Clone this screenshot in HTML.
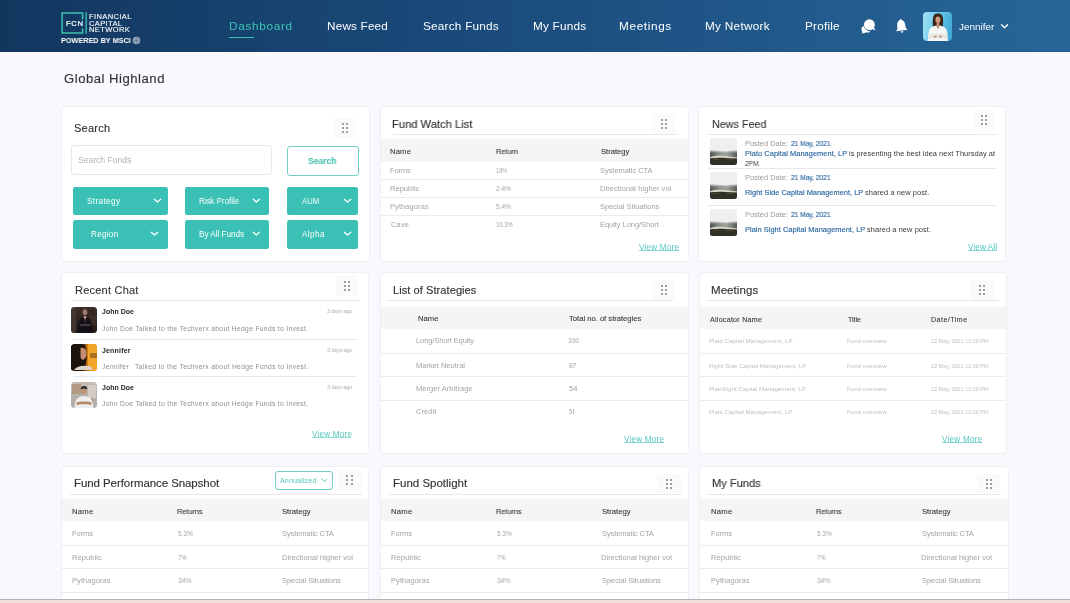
<!DOCTYPE html>
<html><head><meta charset="utf-8"><title>Dashboard</title>
<style>
html,body{margin:0;padding:0;}
body{width:1070px;height:603px;overflow:hidden;position:relative;background:#f8f8fe;font-family:"Liberation Sans",sans-serif;}
.t{position:absolute;white-space:nowrap;line-height:0;font-family:"Liberation Sans",sans-serif;will-change:transform;font-variant-ligatures:none;}
.card{position:absolute;background:#fff;border:1px solid #efefef;border-radius:4px;box-sizing:border-box;}
.hl{position:absolute;height:1px;background:#e6e6e6;}
.dot{position:absolute;width:2px;height:2px;border-radius:50%;background:#7d7d7d;}
</style></head>
<body>
<div style="position:absolute;left:0px;top:0px;width:1070px;height:52px;background:linear-gradient(90deg,#12375f 0%,#1a4b7c 45%,#276698 100%);"></div>
<div style="position:absolute;left:0px;top:51px;width:1070px;height:1px;background:rgba(10,30,60,0.12);"></div>
<div class="card" style="left:61px;top:106px;width:309px;height:156px;"></div>
<div class="card" style="left:380px;top:106px;width:309px;height:156px;"></div>
<div class="card" style="left:698px;top:106px;width:308px;height:156px;"></div>
<div class="card" style="left:61px;top:272px;width:308px;height:182px;"></div>
<div class="card" style="left:380px;top:272px;width:309px;height:182px;"></div>
<div class="card" style="left:699px;top:272px;width:308px;height:182px;"></div>
<div class="card" style="left:61px;top:466px;width:308px;height:154px;"></div>
<div class="card" style="left:380px;top:466px;width:309px;height:154px;"></div>
<div class="card" style="left:699px;top:466px;width:310px;height:154px;"></div>
<div style="position:absolute;left:229px;top:36.7px;width:25px;height:1.5px;background:#3ec3b3;"></div>
<svg style="position:absolute;left:1000px;top:23px" width="9" height="7" viewBox="0 0 9 7"><path d="M1.5 1.8 L4.5 4.8 L7.5 1.8" fill="none" stroke="#fff" stroke-width="1.4" stroke-linecap="round" stroke-linejoin="round"/></svg>
<svg style="position:absolute;left:860px;top:18px" width="17" height="16" viewBox="0 0 17 16"><path d="M4.8 7.2 C2.6 8 1.2 9.8 1.4 11.8 C1.5 12.8 1.9 13.6 2.5 14.2 L1.6 15.3 C3.4 15.4 4.8 15 5.7 14.4 C7.4 14.9 9.3 14.5 10.5 13.4 C7.2 13.5 4.8 11 4.8 7.2 Z" fill="#fff"/><circle cx="9.4" cy="6.7" r="5.6" fill="#fff" stroke="#225b8f" stroke-width="0.8"/><path d="M12.3 11 L15.4 12.6 L13.9 9.3 Z" fill="#fff"/><circle cx="9.4" cy="6.7" r="5.2" fill="#fff"/></svg>
<svg style="position:absolute;left:894px;top:18px" width="15" height="16" viewBox="0 0 15 16"><g transform="rotate(-7 7.3 8)"><path d="M7.3 1 C7.7 1 8 1.5 8.3 2.2 C10.4 2.9 11.2 4.6 11.3 6.8 L11.4 9.8 C11.6 10.9 12.4 11.8 13.2 12.6 L1.5 12.6 C2.3 11.8 3.1 10.9 3.2 9.8 L3.3 6.8 C3.4 4.6 4.2 2.9 6.3 2.2 C6.6 1.5 6.9 1 7.3 1 Z" fill="#fff"/><path d="M6 13.3 L8.6 13.3 C8.6 14.2 8 14.8 7.3 14.8 C6.6 14.8 6 14.2 6 13.3 Z" fill="#fff"/></g></svg>
<div style="position:absolute;left:922.5px;top:11.7px;width:29.3px;height:29.4px;border-radius:4px;overflow:hidden;background:linear-gradient(100deg,#a4e2f5 0%,#74cdec 40%,#3aa6d2 100%);"><svg width="29.3" height="29.4" viewBox="0 0 29 29" style="position:absolute;left:0;top:0"><path d="M10 15 C9.3 10 9.5 4.5 11.5 2.3 C13 1 17 1 18.3 2.5 C20.2 4.5 20.2 10 19.6 15 C18 15.5 11.5 15.5 10 15 Z" fill="#3b2418"/><ellipse cx="14.8" cy="7.6" rx="2.5" ry="3.3" fill="#d09a80"/><path d="M13.6 10 L16 10 L16.3 14 L13.3 14 Z" fill="#c48e74"/><path d="M5 29.5 C5 24 5.2 17.5 8 15.3 C10 14 12 13.5 13.3 13.3 L14.8 17 L16.3 13.3 C17.6 13.5 19.6 14 21.6 15.3 C24.4 17.5 24.6 24 24.6 29.5 Z" fill="#f6f6f4"/><path d="M13.3 13.3 L16.3 13.3 L14.8 17 Z" fill="#c9937a"/><path d="M6.3 22.8 C10 21.3 19 21.3 23.3 22.8 L23.3 26.2 C19 25 10 25 6.3 26.2 Z" fill="#ecebe8" stroke="#d5cfc9" stroke-width="0.4"/><path d="M10.5 23.6 L13.5 23.3 L13.6 25 L10.6 25.3 Z" fill="#c28f76"/><path d="M16 23.3 L19 23.6 L18.9 25.3 L15.9 25 Z" fill="#c28f76"/></svg></div>
<svg style="position:absolute;left:60px;top:11px" width="90" height="35" viewBox="0 0 90 35"><path d="M22.6 8.5 L22.6 1.9 L2.1 1.9 L2.1 21.9 L22.6 21.9 L22.6 17.5" fill="none" stroke="#3ec3b3" stroke-width="1.5"/><rect x="25.5" y="1.2" width="1.3" height="21.5" fill="#3ec3b3"/></svg>
<svg style="position:absolute;left:131.5px;top:35.5px" width="9" height="9" viewBox="0 0 9 9"><circle cx="4.5" cy="4.5" r="3.8" fill="#9aa8bb"/><path d="M4.5 0.8 L4.5 8.2 M0.8 4.5 L8.2 4.5 M1.9 1.9 L7.1 7.1 M7.1 1.9 L1.9 7.1" stroke="#5d7190" stroke-width="0.5"/></svg>
<div style="position:absolute;left:333.5px;top:118px;width:22.5px;height:20px;background:#fafafa;border-radius:2px;"></div>
<div class="dot" style="left:341.8px;top:123.0px"></div>
<div class="dot" style="left:341.8px;top:127.2px"></div>
<div class="dot" style="left:341.8px;top:131.2px"></div>
<div class="dot" style="left:346.2px;top:123.0px"></div>
<div class="dot" style="left:346.2px;top:127.2px"></div>
<div class="dot" style="left:346.2px;top:131.2px"></div>
<div style="position:absolute;left:71.4px;top:145.4px;width:200.4px;height:29.19999999999999px;border:1px solid #e8e8e8;border-radius:3px;box-sizing:border-box;background:#fff;"></div>
<div style="position:absolute;left:286.5px;top:146.2px;width:72.19999999999999px;height:29.400000000000006px;border:1px solid #72d2c6;border-radius:3px;box-sizing:border-box;background:#fff;"></div>
<div style="position:absolute;left:73.3px;top:186.9px;width:94.3px;height:28.299999999999983px;background:#3ac0b4;border-radius:2.5px;"></div>
<svg style="position:absolute;left:153px;top:198.25px" width="9" height="6" viewBox="0 0 9 6"><path d="M1.3 1.3 L4.5 4.0 L7.7 1.3" fill="none" stroke="#fff" stroke-width="1.3" stroke-linecap="round" stroke-linejoin="round"/></svg>
<div style="position:absolute;left:184.9px;top:186.9px;width:84.29999999999998px;height:28.299999999999983px;background:#3ac0b4;border-radius:2.5px;"></div>
<svg style="position:absolute;left:251.7px;top:198.25px" width="8.800000000000011" height="6" viewBox="0 0 8.800000000000011 6"><path d="M1.3 1.3 L4.400000000000006 4.0 L7.5000000000000115 1.3" fill="none" stroke="#fff" stroke-width="1.3" stroke-linecap="round" stroke-linejoin="round"/></svg>
<div style="position:absolute;left:287px;top:186.9px;width:71.39999999999998px;height:28.299999999999983px;background:#3ac0b4;border-radius:2.5px;"></div>
<svg style="position:absolute;left:343.3px;top:198.25px" width="9.099999999999966" height="6" viewBox="0 0 9.099999999999966 6"><path d="M1.3 1.3 L4.549999999999983 4.0 L7.799999999999966 1.3" fill="none" stroke="#fff" stroke-width="1.3" stroke-linecap="round" stroke-linejoin="round"/></svg>
<div style="position:absolute;left:73.3px;top:219.9px;width:94.3px;height:28.69999999999999px;background:#3ac0b4;border-radius:2.5px;"></div>
<svg style="position:absolute;left:149.8px;top:231.45px" width="9.0" height="6" viewBox="0 0 9.0 6"><path d="M1.3 1.3 L4.5 4.0 L7.7 1.3" fill="none" stroke="#fff" stroke-width="1.3" stroke-linecap="round" stroke-linejoin="round"/></svg>
<div style="position:absolute;left:184.9px;top:219.9px;width:84.29999999999998px;height:28.69999999999999px;background:#3ac0b4;border-radius:2.5px;"></div>
<svg style="position:absolute;left:252.2px;top:231.45px" width="8.600000000000023" height="6" viewBox="0 0 8.600000000000023 6"><path d="M1.3 1.3 L4.300000000000011 4.0 L7.300000000000023 1.3" fill="none" stroke="#fff" stroke-width="1.3" stroke-linecap="round" stroke-linejoin="round"/></svg>
<div style="position:absolute;left:287px;top:219.9px;width:71.39999999999998px;height:28.69999999999999px;background:#3ac0b4;border-radius:2.5px;"></div>
<svg style="position:absolute;left:343.3px;top:231.45px" width="9.099999999999966" height="6" viewBox="0 0 9.099999999999966 6"><path d="M1.3 1.3 L4.549999999999983 4.0 L7.799999999999966 1.3" fill="none" stroke="#fff" stroke-width="1.3" stroke-linecap="round" stroke-linejoin="round"/></svg>
<div class="hl" style="left:393px;top:134px;width:283.4px;background:#e8e8e8"></div>
<div style="position:absolute;left:651.8px;top:114.2px;width:23.200000000000045px;height:19.499999999999986px;background:#fafafa;border-radius:2px;"></div>
<div class="dot" style="left:660.9px;top:119.2px"></div>
<div class="dot" style="left:660.9px;top:123.4px"></div>
<div class="dot" style="left:660.9px;top:127.4px"></div>
<div class="dot" style="left:664.9px;top:119.2px"></div>
<div class="dot" style="left:664.9px;top:123.4px"></div>
<div class="dot" style="left:664.9px;top:127.4px"></div>
<div style="position:absolute;left:381px;top:139.2px;width:307px;height:22.400000000000006px;background:#f5f5f5;"></div>
<div class="hl" style="left:381px;top:178.8px;width:307px;background:#ebebeb"></div>
<div class="hl" style="left:381px;top:196.9px;width:307px;background:#ebebeb"></div>
<div class="hl" style="left:381px;top:215.1px;width:307px;background:#ebebeb"></div>
<div class="hl" style="left:708px;top:134px;width:289px;background:#e8e8e8"></div>
<div style="position:absolute;left:972.7px;top:110px;width:22.699999999999932px;height:20.599999999999994px;background:#fafafa;border-radius:2px;"></div>
<div class="dot" style="left:981.2px;top:115.3px"></div>
<div class="dot" style="left:981.2px;top:119.3px"></div>
<div class="dot" style="left:981.2px;top:123.3px"></div>
<div class="dot" style="left:984.9px;top:115.3px"></div>
<div class="dot" style="left:984.9px;top:119.3px"></div>
<div class="dot" style="left:984.9px;top:123.3px"></div>
<div style="position:absolute;left:710.2px;top:137.9px;width:27px;height:27px;border-radius:2.5px;overflow:hidden;background:#eeeeec"><svg width="27" height="27" viewBox="0 0 27 27" style="position:absolute;left:0;top:0"><defs><linearGradient id="nm" x1="0" y1="0" x2="1" y2="0"><stop offset="0" stop-color="#4f554f"/><stop offset="0.35" stop-color="#8c918c"/><stop offset="0.6" stop-color="#9fa49f"/><stop offset="1" stop-color="#555b55"/></linearGradient><linearGradient id="nv" x1="0" y1="0" x2="0" y2="1"><stop offset="0" stop-color="#eeeeec" stop-opacity="1"/><stop offset="1" stop-color="#eeeeec" stop-opacity="0"/></linearGradient></defs><rect x="0" y="0" width="27" height="12" fill="#efefed"/><path d="M0 12.5 C5 11.8 9 13 13.5 13.3 C18 13.5 22 12 27 12.3 L27 21 L0 21 Z" fill="url(#nm)"/><rect x="0" y="11.5" width="27" height="3.5" fill="url(#nv)"/><path d="M0 19.2 C4 18.2 8 17.6 13 18 C17 18.3 21 18.8 27 19.4 L27 21 L0 21 Z" fill="#d9d5c8"/><path d="M0 20.3 C5 19.9 10 19.6 15 20 C19 20.3 23 20.2 27 20.5 L27 27 L0 27 Z" fill="#2f3129"/><rect x="3" y="21" width="6" height="1" fill="#5a5238" opacity="0.7"/><rect x="15" y="21.2" width="8" height="1" fill="#5a5238" opacity="0.6"/></svg></div>
<div style="position:absolute;left:710.3px;top:172.1px;width:27px;height:27px;border-radius:2.5px;overflow:hidden;background:#eeeeec"><svg width="27" height="27" viewBox="0 0 27 27" style="position:absolute;left:0;top:0"><defs><linearGradient id="nm" x1="0" y1="0" x2="1" y2="0"><stop offset="0" stop-color="#4f554f"/><stop offset="0.35" stop-color="#8c918c"/><stop offset="0.6" stop-color="#9fa49f"/><stop offset="1" stop-color="#555b55"/></linearGradient><linearGradient id="nv" x1="0" y1="0" x2="0" y2="1"><stop offset="0" stop-color="#eeeeec" stop-opacity="1"/><stop offset="1" stop-color="#eeeeec" stop-opacity="0"/></linearGradient></defs><rect x="0" y="0" width="27" height="12" fill="#efefed"/><path d="M0 12.5 C5 11.8 9 13 13.5 13.3 C18 13.5 22 12 27 12.3 L27 21 L0 21 Z" fill="url(#nm)"/><rect x="0" y="11.5" width="27" height="3.5" fill="url(#nv)"/><path d="M0 19.2 C4 18.2 8 17.6 13 18 C17 18.3 21 18.8 27 19.4 L27 21 L0 21 Z" fill="#d9d5c8"/><path d="M0 20.3 C5 19.9 10 19.6 15 20 C19 20.3 23 20.2 27 20.5 L27 27 L0 27 Z" fill="#2f3129"/><rect x="3" y="21" width="6" height="1" fill="#5a5238" opacity="0.7"/><rect x="15" y="21.2" width="8" height="1" fill="#5a5238" opacity="0.6"/></svg></div>
<div style="position:absolute;left:710.3px;top:209.1px;width:27px;height:27px;border-radius:2.5px;overflow:hidden;background:#eeeeec"><svg width="27" height="27" viewBox="0 0 27 27" style="position:absolute;left:0;top:0"><defs><linearGradient id="nm" x1="0" y1="0" x2="1" y2="0"><stop offset="0" stop-color="#4f554f"/><stop offset="0.35" stop-color="#8c918c"/><stop offset="0.6" stop-color="#9fa49f"/><stop offset="1" stop-color="#555b55"/></linearGradient><linearGradient id="nv" x1="0" y1="0" x2="0" y2="1"><stop offset="0" stop-color="#eeeeec" stop-opacity="1"/><stop offset="1" stop-color="#eeeeec" stop-opacity="0"/></linearGradient></defs><rect x="0" y="0" width="27" height="12" fill="#efefed"/><path d="M0 12.5 C5 11.8 9 13 13.5 13.3 C18 13.5 22 12 27 12.3 L27 21 L0 21 Z" fill="url(#nm)"/><rect x="0" y="11.5" width="27" height="3.5" fill="url(#nv)"/><path d="M0 19.2 C4 18.2 8 17.6 13 18 C17 18.3 21 18.8 27 19.4 L27 21 L0 21 Z" fill="#d9d5c8"/><path d="M0 20.3 C5 19.9 10 19.6 15 20 C19 20.3 23 20.2 27 20.5 L27 27 L0 27 Z" fill="#2f3129"/><rect x="3" y="21" width="6" height="1" fill="#5a5238" opacity="0.7"/><rect x="15" y="21.2" width="8" height="1" fill="#5a5238" opacity="0.6"/></svg></div>
<div class="hl" style="left:708px;top:168.2px;width:289px;background:#e8e8e8"></div>
<div class="hl" style="left:708px;top:204.7px;width:289px;background:#e8e8e8"></div>
<div class="hl" style="left:71px;top:300px;width:289px;background:#e8e8e8"></div>
<div style="position:absolute;left:335.6px;top:276.2px;width:22.69999999999999px;height:20.30000000000001px;background:#fafafa;border-radius:2px;"></div>
<div class="dot" style="left:344.1px;top:281.1px"></div>
<div class="dot" style="left:344.1px;top:285.3px"></div>
<div class="dot" style="left:344.1px;top:289.2px"></div>
<div class="dot" style="left:347.9px;top:281.1px"></div>
<div class="dot" style="left:347.9px;top:285.3px"></div>
<div class="dot" style="left:347.9px;top:289.2px"></div>
<div style="position:absolute;left:71px;top:306.7px;width:26.2px;height:26.2px;border-radius:3.5px;overflow:hidden;background:linear-gradient(180deg,#3a2c28 0%,#251a18 100%)"><svg width="26" height="26" viewBox="0 0 26 26" style="position:absolute;left:0;top:0"><rect x="0" y="0" width="5" height="26" fill="#4a3c36" opacity="0.7"/><rect x="19" y="8" width="7" height="10" fill="#3e302a" opacity="0.8"/><ellipse cx="14" cy="5.2" rx="2.3" ry="3" fill="#a07868"/><path d="M6.5 26 C6.5 15 9 10 14 10 C19 10 21.5 15 21.5 26 Z" fill="#141116"/><path d="M12.5 9.5 L15.5 9.5 L14 13 Z" fill="#e0dcdc"/><path d="M13.6 10.5 L14.4 10.5 L14.6 15 L13.4 15 Z" fill="#7a2a30"/><path d="M9 17.5 C11 16.8 17 16.8 19.5 17.5 L19.5 19 C17 18.5 11 18.5 9 19 Z" fill="#4e4248"/></svg></div>
<div style="position:absolute;left:71px;top:344.4px;width:26.2px;height:26.2px;border-radius:3.5px;overflow:hidden;background:linear-gradient(90deg,#1e150f 0%,#2a1d14 45%,#c9780e 62%,#f2a526 100%)"><svg width="26" height="26" viewBox="0 0 26 26" style="position:absolute;left:0;top:0"><rect x="17" y="0" width="9" height="26" fill="#f0a428"/><rect x="19" y="9" width="7" height="5" fill="#8a5a20" opacity="0.7"/><path d="M0 26 L0 2 C3 -1 11 -1 14 2 C16 6 16 14 15 18 L14 26 Z" fill="#1c130e"/><path d="M9.5 4 C12 3 15 4.5 15.5 8 C16 11 15 14 13 15.5 C11.5 16.5 10 15 9.5 13 Z" fill="#c48c70"/><path d="M3 26 C6 21.5 13 21 20 22.5 L22 26 Z" fill="#dcd4cc"/></svg></div>
<div style="position:absolute;left:71px;top:381.8px;width:26.2px;height:26.2px;border-radius:3.5px;overflow:hidden;background:linear-gradient(180deg,#c4bcb4 0%,#b0aaa4 100%)"><svg width="26" height="26" viewBox="0 0 26 26" style="position:absolute;left:0;top:0"><rect x="1" y="2" width="9" height="10" fill="#a8845c" opacity="0.55"/><rect x="17" y="3" width="8" height="13" fill="#d8d2cc" opacity="0.8"/><rect x="19" y="17" width="3" height="8" fill="#a04030" opacity="0.5"/><path d="M9.8 6.5 C9.8 3.2 16.2 3.2 16.2 6.5 L16.2 7.3 L9.8 7.3 Z" fill="#2c2c34"/><ellipse cx="13" cy="9.5" rx="2.7" ry="3" fill="#c09474"/><path d="M3.5 26 C3.5 17.5 7 14 13 14 C19 14 22.5 17.5 22.5 26 Z" fill="#eeeeee"/><path d="M5.5 20.5 C9 19.2 17 19.2 20.5 20.5 L20.5 23 C17 22 9 22 5.5 23 Z" fill="#b48a6c"/></svg></div>
<div class="hl" style="left:73.2px;top:338.8px;width:284.1px;background:#e8e8e8"></div>
<div class="hl" style="left:73.2px;top:375.9px;width:284.1px;background:#e8e8e8"></div>
<div class="hl" style="left:387.2px;top:300px;width:284.09999999999997px;background:#e8e8e8"></div>
<div style="position:absolute;left:652.4px;top:280.2px;width:22.899999999999977px;height:19.5px;background:#fafafa;border-radius:2px;"></div>
<div class="dot" style="left:661.3px;top:285.2px"></div>
<div class="dot" style="left:661.3px;top:289.2px"></div>
<div class="dot" style="left:661.3px;top:293.4px"></div>
<div class="dot" style="left:665.4px;top:285.2px"></div>
<div class="dot" style="left:665.4px;top:289.2px"></div>
<div class="dot" style="left:665.4px;top:293.4px"></div>
<div style="position:absolute;left:381px;top:306.7px;width:307px;height:22.100000000000023px;background:#f5f5f5;"></div>
<div class="hl" style="left:381px;top:352.8px;width:307px;background:#ebebeb"></div>
<div class="hl" style="left:381px;top:375.7px;width:307px;background:#ebebeb"></div>
<div class="hl" style="left:381px;top:400.1px;width:307px;background:#ebebeb"></div>
<div class="hl" style="left:707.2px;top:300px;width:292.0999999999999px;background:#e8e8e8"></div>
<div style="position:absolute;left:970.1px;top:280.2px;width:23.199999999999932px;height:19.5px;background:#fafafa;border-radius:2px;"></div>
<div class="dot" style="left:978.8px;top:285.3px"></div>
<div class="dot" style="left:978.8px;top:289.3px"></div>
<div class="dot" style="left:978.8px;top:293.3px"></div>
<div class="dot" style="left:983.0px;top:285.3px"></div>
<div class="dot" style="left:983.0px;top:289.3px"></div>
<div class="dot" style="left:983.0px;top:293.3px"></div>
<div style="position:absolute;left:700px;top:306.7px;width:306px;height:21.900000000000034px;background:#f5f5f5;"></div>
<div class="hl" style="left:700px;top:352.5px;width:306px;background:#ebebeb"></div>
<div class="hl" style="left:700px;top:375.7px;width:306px;background:#ebebeb"></div>
<div class="hl" style="left:700px;top:399.9px;width:306px;background:#ebebeb"></div>
<div class="hl" style="left:69.8px;top:494px;width:292.5px;background:#e8e8e8"></div>
<div style="position:absolute;left:337.9px;top:469.7px;width:23.100000000000023px;height:20.19999999999999px;background:#fafafa;border-radius:2px;"></div>
<div class="dot" style="left:346.3px;top:475.4px"></div>
<div class="dot" style="left:346.3px;top:479.4px"></div>
<div class="dot" style="left:346.3px;top:483.3px"></div>
<div class="dot" style="left:350.8px;top:475.4px"></div>
<div class="dot" style="left:350.8px;top:479.4px"></div>
<div class="dot" style="left:350.8px;top:483.3px"></div>
<div style="position:absolute;left:62px;top:498.9px;width:306px;height:22.399999999999977px;background:#f5f5f5;"></div>
<div class="hl" style="left:62px;top:544.9px;width:306px;background:#ebebeb"></div>
<div class="hl" style="left:62px;top:568.4px;width:306px;background:#ebebeb"></div>
<div class="hl" style="left:62px;top:592.0px;width:306px;background:#ebebeb"></div>
<div class="hl" style="left:389px;top:494px;width:292.79999999999995px;background:#e8e8e8"></div>
<div style="position:absolute;left:656.9px;top:473.5px;width:23.700000000000045px;height:19.399999999999977px;background:#fafafa;border-radius:2px;"></div>
<div class="dot" style="left:666.1px;top:479.2px"></div>
<div class="dot" style="left:666.1px;top:483.2px"></div>
<div class="dot" style="left:666.1px;top:487.1px"></div>
<div class="dot" style="left:670.1px;top:479.2px"></div>
<div class="dot" style="left:670.1px;top:483.2px"></div>
<div class="dot" style="left:670.1px;top:487.1px"></div>
<div style="position:absolute;left:381px;top:498.9px;width:307px;height:22.399999999999977px;background:#f5f5f5;"></div>
<div class="hl" style="left:381px;top:544.9px;width:307px;background:#ebebeb"></div>
<div class="hl" style="left:381px;top:568.4px;width:307px;background:#ebebeb"></div>
<div class="hl" style="left:381px;top:592.0px;width:307px;background:#ebebeb"></div>
<div class="hl" style="left:708.3px;top:494px;width:293.1px;background:#e8e8e8"></div>
<div style="position:absolute;left:977.1px;top:473.5px;width:22.799999999999955px;height:19.399999999999977px;background:#fafafa;border-radius:2px;"></div>
<div class="dot" style="left:985.9px;top:479.2px"></div>
<div class="dot" style="left:985.9px;top:483.2px"></div>
<div class="dot" style="left:985.9px;top:487.1px"></div>
<div class="dot" style="left:989.9px;top:479.2px"></div>
<div class="dot" style="left:989.9px;top:483.2px"></div>
<div class="dot" style="left:989.9px;top:487.1px"></div>
<div style="position:absolute;left:700px;top:498.9px;width:308px;height:22.399999999999977px;background:#f5f5f5;"></div>
<div class="hl" style="left:700px;top:544.9px;width:308px;background:#ebebeb"></div>
<div class="hl" style="left:700px;top:568.4px;width:308px;background:#ebebeb"></div>
<div class="hl" style="left:700px;top:592.0px;width:308px;background:#ebebeb"></div>
<div style="position:absolute;left:275.4px;top:471.2px;width:57.60000000000002px;height:18.400000000000034px;border:1px solid #6fd0c4;border-radius:3px;box-sizing:border-box;background:#fff;"></div>
<svg style="position:absolute;left:321.2px;top:477.8px" width="7" height="5" viewBox="0 0 7 5"><path d="M1 1.2 L3.5 3.6 L6 1.2" fill="none" stroke="#55c8ba" stroke-width="1" stroke-linecap="round" stroke-linejoin="round"/></svg>
<div style="position:absolute;left:638.9px;top:250.0px;width:39.80000000000007px;height:1.0px;background:#8cdad0;"></div>
<div style="position:absolute;left:967.8px;top:250.0px;width:29.0px;height:1.0px;background:#8cdad0;"></div>
<div style="position:absolute;left:311.8px;top:437.0px;width:39.69999999999999px;height:1.0px;background:#8cdad0;"></div>
<div style="position:absolute;left:624.3px;top:442.0px;width:39.700000000000045px;height:1.0px;background:#8cdad0;"></div>
<div style="position:absolute;left:942.0px;top:442.0px;width:40.0px;height:1.0px;background:#8cdad0;"></div>
<div class="t" style="left:228.80px;top:25.92px;font-size:11.77px;color:#3ec3b3;letter-spacing:0.700px;">Dashboard</div>
<div class="t" style="left:327.40px;top:25.92px;font-size:11.77px;color:#ffffff;letter-spacing:0.169px;">News Feed</div>
<div class="t" style="left:422.50px;top:25.92px;font-size:11.77px;color:#ffffff;letter-spacing:0.227px;">Search Funds</div>
<div class="t" style="left:532.50px;top:25.92px;font-size:11.77px;color:#ffffff;letter-spacing:0.221px;">My Funds</div>
<div class="t" style="left:619.40px;top:25.92px;font-size:11.77px;color:#ffffff;letter-spacing:0.643px;">Meetings</div>
<div class="t" style="left:705.40px;top:25.92px;font-size:11.77px;color:#ffffff;letter-spacing:0.289px;">My Network</div>
<div class="t" style="left:804.80px;top:25.92px;font-size:11.77px;color:#ffffff;letter-spacing:0.200px;">Profile</div>
<div class="t" style="left:958.55px;top:26.58px;font-size:9.88px;color:#ffffff;letter-spacing:0.021px;">Jennifer</div>
<div class="t" style="left:66.40px;top:24.13px;font-size:7.70px;color:#ffffff;letter-spacing:0.675px;-webkit-text-stroke:0.2px #ffffff;">FCN</div>
<div class="t" style="left:88.70px;top:16.68px;font-size:7.56px;color:#ffffff;letter-spacing:0.381px;-webkit-text-stroke:0.1px #ffffff;">FINANCIAL</div>
<div class="t" style="left:88.95px;top:23.98px;font-size:7.56px;color:#ffffff;letter-spacing:0.350px;-webkit-text-stroke:0.1px #ffffff;">CAPITAL</div>
<div class="t" style="left:88.70px;top:30.38px;font-size:7.56px;color:#ffffff;letter-spacing:0.367px;-webkit-text-stroke:0.1px #ffffff;">NETWORK</div>
<div class="t" style="left:60.74px;top:41.08px;font-size:7.85px;color:#ffffff;transform:scaleX(0.9262);transform-origin:0 0;font-weight:700;">POWERED BY MSCI</div>
<div class="t" style="left:64.00px;top:79.47px;font-size:13.08px;color:#333333;letter-spacing:0.525px;-webkit-text-stroke:0.15px #333333;">Global Highland</div>
<div class="t" style="left:74.20px;top:128.27px;font-size:11.05px;color:#333333;letter-spacing:0.210px;-webkit-text-stroke:0.15px #333333;">Search</div>
<div class="t" style="left:78.20px;top:160.23px;font-size:8.58px;color:#b3b3b3;letter-spacing:-0.018px;">Search Funds</div>
<div class="t" style="left:308.36px;top:160.88px;font-size:9.01px;color:#3dbcad;transform:scaleX(0.9470);transform-origin:0 0;font-weight:700;">Search</div>
<div class="t" style="left:87.45px;top:202.35px;font-size:8.21px;color:#ffffff;letter-spacing:0.350px;">Strategy</div>
<div class="t" style="left:199.12px;top:202.35px;font-size:8.21px;color:#ffffff;transform:scaleX(0.9669);transform-origin:0 0;">Risk Profile</div>
<div class="t" style="left:301.70px;top:202.35px;font-size:8.21px;color:#ffffff;transform:scaleX(0.9314);transform-origin:0 0;">AUM</div>
<div class="t" style="left:90.50px;top:234.55px;font-size:8.21px;color:#ffffff;letter-spacing:0.240px;">Region</div>
<div class="t" style="left:199.10px;top:234.55px;font-size:8.21px;color:#ffffff;letter-spacing:-0.041px;">By All Funds</div>
<div class="t" style="left:301.70px;top:234.55px;font-size:8.21px;color:#ffffff;letter-spacing:0.400px;">Alpha</div>
<div class="t" style="left:392.22px;top:124.12px;font-size:11.48px;color:#333333;transform:scaleX(0.9755);transform-origin:0 0;-webkit-text-stroke:0.15px #333333;">Fund Watch List</div>
<div class="t" style="left:390.40px;top:152.43px;font-size:7.70px;color:#383838;letter-spacing:0.133px;-webkit-text-stroke:0.1px #383838;">Name</div>
<div class="t" style="left:496.12px;top:152.43px;font-size:7.70px;color:#383838;transform:scaleX(0.9573);transform-origin:0 0;-webkit-text-stroke:0.1px #383838;">Return</div>
<div class="t" style="left:600.75px;top:152.43px;font-size:7.70px;color:#383838;letter-spacing:-0.029px;-webkit-text-stroke:0.1px #383838;">Strategy</div>
<div class="t" style="left:390.40px;top:171.31px;font-size:7.49px;color:#a3a3a3;letter-spacing:-0.087px;">Forms</div>
<div class="t" style="left:496.23px;top:171.31px;font-size:7.49px;color:#a3a3a3;transform:scaleX(0.7368);transform-origin:0 0;">10%</div>
<div class="t" style="left:600.45px;top:171.31px;font-size:7.49px;color:#a3a3a3;letter-spacing:-0.042px;">Systematic CTA</div>
<div class="t" style="left:390.40px;top:189.41px;font-size:7.49px;color:#a3a3a3;letter-spacing:0.029px;">Republic</div>
<div class="t" style="left:496.38px;top:189.41px;font-size:7.49px;color:#a3a3a3;transform:scaleX(0.8606);transform-origin:0 0;">2.4%</div>
<div class="t" style="left:600.20px;top:189.41px;font-size:7.49px;color:#a3a3a3;letter-spacing:0.067px;">Directional higher vol</div>
<div class="t" style="left:390.40px;top:206.61px;font-size:7.49px;color:#a3a3a3;letter-spacing:0.094px;">Pythagoras</div>
<div class="t" style="left:496.38px;top:206.61px;font-size:7.49px;color:#a3a3a3;transform:scaleX(0.8606);transform-origin:0 0;">5.4%</div>
<div class="t" style="left:600.45px;top:206.61px;font-size:7.49px;color:#a3a3a3;letter-spacing:-0.012px;">Special Situations</div>
<div class="t" style="left:390.65px;top:224.81px;font-size:7.49px;color:#a3a3a3;letter-spacing:0.167px;">Cave</div>
<div class="t" style="left:496.20px;top:224.81px;font-size:7.49px;color:#a3a3a3;transform:scaleX(0.7902);transform-origin:0 0;">10.3%</div>
<div class="t" style="left:600.20px;top:224.81px;font-size:7.49px;color:#a3a3a3;letter-spacing:-0.044px;">Equity Long/Short</div>
<div class="t" style="left:638.90px;top:247.98px;font-size:8.14px;color:#55c8ba;letter-spacing:0.225px;">View More</div>
<div class="t" style="left:711.97px;top:123.97px;font-size:11.05px;color:#333333;transform:scaleX(0.9743);transform-origin:0 0;-webkit-text-stroke:0.1px #333333;">News Feed</div>
<div class="t" style="left:744.50px;top:144.33px;font-size:7.41px;color:#9a9a9a;letter-spacing:0.005px;">Posted Date:</div>
<div class="t" style="left:790.58px;top:144.33px;font-size:7.41px;color:#2d69a3;transform:scaleX(0.8914);transform-origin:0 0;-webkit-text-stroke:0.15px #2d69a3;">21 May, 2021</div>
<div class="t" style="left:744.50px;top:154.43px;font-size:7.41px;color:#2d69a3;letter-spacing:0.065px;-webkit-text-stroke:0.15px #2d69a3;">Plato Capital Management, LP</div>
<div class="t" style="left:848.70px;top:154.43px;font-size:7.41px;color:#3a3a3a;letter-spacing:0.057px;">is presenting the best idea next Thursday at</div>
<div class="t" style="left:744.78px;top:163.93px;font-size:7.41px;color:#3a3a3a;transform:scaleX(0.8909);transform-origin:0 0;">2PM.</div>
<div class="t" style="left:744.50px;top:177.63px;font-size:7.41px;color:#9a9a9a;letter-spacing:0.005px;">Posted Date:</div>
<div class="t" style="left:790.58px;top:177.63px;font-size:7.41px;color:#2d69a3;transform:scaleX(0.8914);transform-origin:0 0;-webkit-text-stroke:0.15px #2d69a3;">21 May, 2021</div>
<div class="t" style="left:744.50px;top:193.03px;font-size:7.41px;color:#2d69a3;letter-spacing:0.016px;-webkit-text-stroke:0.15px #2d69a3;">Right Side Capital Management, LP</div>
<div class="t" style="left:865.25px;top:193.03px;font-size:7.41px;color:#3a3a3a;letter-spacing:0.103px;">shared a new post.</div>
<div class="t" style="left:744.50px;top:214.63px;font-size:7.41px;color:#9a9a9a;letter-spacing:0.005px;">Posted Date:</div>
<div class="t" style="left:790.58px;top:214.63px;font-size:7.41px;color:#2d69a3;transform:scaleX(0.8914);transform-origin:0 0;-webkit-text-stroke:0.15px #2d69a3;">21 May, 2021</div>
<div class="t" style="left:744.50px;top:229.93px;font-size:7.41px;color:#2d69a3;letter-spacing:0.038px;-webkit-text-stroke:0.15px #2d69a3;">Plain Sight Capital Management, LP</div>
<div class="t" style="left:867.25px;top:229.93px;font-size:7.41px;color:#3a3a3a;letter-spacing:0.085px;">shared a new post.</div>
<div class="t" style="left:967.80px;top:248.38px;font-size:8.14px;color:#55c8ba;letter-spacing:0.107px;">View All</div>
<div class="t" style="left:74.75px;top:290.27px;font-size:11.05px;color:#333333;letter-spacing:0.200px;-webkit-text-stroke:0.1px #333333;">Recent Chat</div>
<div class="t" style="left:102.20px;top:311.68px;font-size:6.98px;color:#262626;letter-spacing:0.029px;font-weight:700;">John Doe</div>
<div class="t" style="left:326.76px;top:311.34px;font-size:5.38px;color:#ababab;transform:scaleX(0.9538);transform-origin:0 0;">3 days ago</div>
<div class="t" style="left:102.20px;top:328.58px;font-size:6.69px;color:#8e8e8e;letter-spacing:0.332px;">John Doe Talked to the Techverx about Hedge Funds to Invest.</div>
<div class="t" style="left:102.20px;top:350.88px;font-size:6.98px;color:#262626;letter-spacing:0.186px;font-weight:700;">Jennifer</div>
<div class="t" style="left:326.76px;top:350.14px;font-size:5.38px;color:#ababab;transform:scaleX(0.9538);transform-origin:0 0;">3 days ago</div>
<div class="t" style="left:102.20px;top:367.48px;font-size:6.69px;color:#8e8e8e;letter-spacing:0.407px;">Jennifer</div>
<div class="t" style="left:135.00px;top:367.48px;font-size:6.69px;color:#8e8e8e;letter-spacing:0.346px;">Talked to the Techverx about Hedge Funds to Invest.</div>
<div class="t" style="left:102.20px;top:388.28px;font-size:6.98px;color:#262626;letter-spacing:0.029px;font-weight:700;">John Doe</div>
<div class="t" style="left:326.76px;top:386.94px;font-size:5.38px;color:#ababab;transform:scaleX(0.9538);transform-origin:0 0;">3 days ago</div>
<div class="t" style="left:102.20px;top:403.88px;font-size:6.69px;color:#8e8e8e;letter-spacing:0.332px;">John Doe Talked to the Techverx about Hedge Funds to Invest.</div>
<div class="t" style="left:311.80px;top:434.88px;font-size:8.14px;color:#55c8ba;letter-spacing:0.212px;">View More</div>
<div class="t" style="left:393.05px;top:290.27px;font-size:11.05px;color:#333333;letter-spacing:0.062px;-webkit-text-stroke:0.15px #333333;">List of Strategies</div>
<div class="t" style="left:418.40px;top:318.93px;font-size:7.70px;color:#383838;letter-spacing:-0.017px;-webkit-text-stroke:0.1px #383838;">Name</div>
<div class="t" style="left:568.90px;top:318.93px;font-size:7.70px;color:#383838;letter-spacing:-0.032px;-webkit-text-stroke:0.1px #383838;">Total no. of strategies</div>
<div class="t" style="left:416.20px;top:341.01px;font-size:7.49px;color:#a3a3a3;letter-spacing:-0.094px;">Long/Short Equity</div>
<div class="t" style="left:568.46px;top:341.01px;font-size:7.49px;color:#a3a3a3;transform:scaleX(0.8766);transform-origin:0 0;">100</div>
<div class="t" style="left:416.20px;top:366.21px;font-size:7.49px;color:#a3a3a3;letter-spacing:-0.004px;">Market Neutral</div>
<div class="t" style="left:568.69px;top:366.21px;font-size:7.49px;color:#a3a3a3;transform:scaleX(0.8516);transform-origin:0 0;">87</div>
<div class="t" style="left:416.20px;top:389.01px;font-size:7.49px;color:#a3a3a3;letter-spacing:0.053px;">Merger Arbitrage</div>
<div class="t" style="left:568.66px;top:389.01px;font-size:7.49px;color:#a3a3a3;transform:scaleX(0.9500);transform-origin:0 0;">54</div>
<div class="t" style="left:416.45px;top:412.41px;font-size:7.49px;color:#a3a3a3;letter-spacing:0.070px;">Credit</div>
<div class="t" style="left:568.73px;top:412.41px;font-size:7.49px;color:#a3a3a3;transform:scaleX(0.6839);transform-origin:0 0;">51</div>
<div class="t" style="left:624.30px;top:440.18px;font-size:8.14px;color:#55c8ba;letter-spacing:0.213px;">View More</div>
<div class="t" style="left:710.70px;top:290.12px;font-size:11.48px;color:#333333;letter-spacing:0.093px;-webkit-text-stroke:0.15px #333333;">Meetings</div>
<div class="t" style="left:709.70px;top:320.43px;font-size:7.12px;color:#383838;letter-spacing:0.254px;-webkit-text-stroke:0.1px #383838;">Allocator Name</div>
<div class="t" style="left:848.00px;top:320.43px;font-size:7.12px;color:#383838;letter-spacing:-0.025px;-webkit-text-stroke:0.1px #383838;">Title</div>
<div class="t" style="left:930.50px;top:320.43px;font-size:7.12px;color:#383838;letter-spacing:0.456px;-webkit-text-stroke:0.1px #383838;">Date/Time</div>
<div class="t" style="left:709.20px;top:340.66px;font-size:6.18px;color:#c0c0c0;letter-spacing:-0.007px;">Plato Capital Management, LP</div>
<div class="t" style="left:847.30px;top:340.66px;font-size:6.18px;color:#c0c0c0;letter-spacing:-0.037px;">Fund overview</div>
<div class="t" style="left:930.78px;top:340.66px;font-size:6.18px;color:#c0c0c0;transform:scaleX(0.8837);transform-origin:0 0;">22 May, 2021 12:00 PM</div>
<div class="t" style="left:709.20px;top:366.46px;font-size:6.18px;color:#c0c0c0;letter-spacing:-0.023px;">Right Side Capital Management, LP</div>
<div class="t" style="left:847.30px;top:366.46px;font-size:6.18px;color:#c0c0c0;letter-spacing:-0.037px;">Fund overview</div>
<div class="t" style="left:930.78px;top:366.46px;font-size:6.18px;color:#c0c0c0;transform:scaleX(0.8837);transform-origin:0 0;">22 May, 2021 12:00 PM</div>
<div class="t" style="left:709.20px;top:388.86px;font-size:6.18px;color:#c0c0c0;letter-spacing:-0.020px;">PlainSight Capital Management, LP</div>
<div class="t" style="left:847.30px;top:388.86px;font-size:6.18px;color:#c0c0c0;letter-spacing:-0.037px;">Fund overview</div>
<div class="t" style="left:930.78px;top:388.86px;font-size:6.18px;color:#c0c0c0;transform:scaleX(0.8837);transform-origin:0 0;">22 May, 2021 12:00 PM</div>
<div class="t" style="left:709.20px;top:412.26px;font-size:6.18px;color:#c0c0c0;letter-spacing:-0.011px;">Plato Capital Management, LP</div>
<div class="t" style="left:847.30px;top:412.26px;font-size:6.18px;color:#c0c0c0;letter-spacing:-0.037px;">Fund overview</div>
<div class="t" style="left:930.78px;top:412.26px;font-size:6.18px;color:#c0c0c0;transform:scaleX(0.8837);transform-origin:0 0;">22 May, 2021 12:00 PM</div>
<div class="t" style="left:942.00px;top:440.18px;font-size:8.14px;color:#55c8ba;letter-spacing:0.250px;">View More</div>
<div class="t" style="left:73.70px;top:483.42px;font-size:11.48px;color:#333333;letter-spacing:-0.060px;-webkit-text-stroke:0.15px #333333;">Fund Performance Snapshot</div>
<div class="t" style="left:71.70px;top:512.23px;font-size:7.70px;color:#383838;letter-spacing:0.250px;-webkit-text-stroke:0.1px #383838;">Name</div>
<div class="t" style="left:177.42px;top:512.23px;font-size:7.70px;color:#383838;transform:scaleX(0.9524);transform-origin:0 0;-webkit-text-stroke:0.1px #383838;">Returns</div>
<div class="t" style="left:282.35px;top:512.23px;font-size:7.70px;color:#383838;letter-spacing:-0.014px;-webkit-text-stroke:0.1px #383838;">Strategy</div>
<div class="t" style="left:71.70px;top:534.41px;font-size:7.49px;color:#a3a3a3;letter-spacing:-0.050px;">Forms</div>
<div class="t" style="left:177.68px;top:534.41px;font-size:7.49px;color:#a3a3a3;transform:scaleX(0.8606);transform-origin:0 0;">5.3%</div>
<div class="t" style="left:282.35px;top:534.41px;font-size:7.49px;color:#a3a3a3;letter-spacing:-0.096px;">Systematic CTA</div>
<div class="t" style="left:71.70px;top:558.01px;font-size:7.49px;color:#a3a3a3;letter-spacing:0.071px;">Republic</div>
<div class="t" style="left:177.70px;top:558.01px;font-size:7.49px;color:#a3a3a3;transform:scaleX(0.7810);transform-origin:0 0;">7%</div>
<div class="t" style="left:282.10px;top:558.01px;font-size:7.49px;color:#a3a3a3;letter-spacing:0.048px;">Directional higher vol</div>
<div class="t" style="left:71.70px;top:581.01px;font-size:7.49px;color:#a3a3a3;letter-spacing:0.072px;">Pythagoras</div>
<div class="t" style="left:177.68px;top:581.01px;font-size:7.49px;color:#a3a3a3;transform:scaleX(0.8966);transform-origin:0 0;">34%</div>
<div class="t" style="left:282.35px;top:581.01px;font-size:7.49px;color:#a3a3a3;letter-spacing:-0.041px;">Special Situations</div>
<div class="t" style="left:392.50px;top:483.42px;font-size:11.48px;color:#333333;letter-spacing:0.015px;-webkit-text-stroke:0.15px #333333;">Fund Spotlight</div>
<div class="t" style="left:391.20px;top:512.23px;font-size:7.70px;color:#383838;letter-spacing:0.250px;-webkit-text-stroke:0.1px #383838;">Name</div>
<div class="t" style="left:496.42px;top:512.23px;font-size:7.70px;color:#383838;transform:scaleX(0.9524);transform-origin:0 0;-webkit-text-stroke:0.1px #383838;">Returns</div>
<div class="t" style="left:601.55px;top:512.23px;font-size:7.70px;color:#383838;letter-spacing:-0.014px;-webkit-text-stroke:0.1px #383838;">Strategy</div>
<div class="t" style="left:391.20px;top:534.41px;font-size:7.49px;color:#a3a3a3;letter-spacing:-0.050px;">Forms</div>
<div class="t" style="left:496.68px;top:534.41px;font-size:7.49px;color:#a3a3a3;transform:scaleX(0.8606);transform-origin:0 0;">5.3%</div>
<div class="t" style="left:601.55px;top:534.41px;font-size:7.49px;color:#a3a3a3;letter-spacing:-0.096px;">Systematic CTA</div>
<div class="t" style="left:391.20px;top:558.01px;font-size:7.49px;color:#a3a3a3;letter-spacing:0.071px;">Republic</div>
<div class="t" style="left:496.70px;top:558.01px;font-size:7.49px;color:#a3a3a3;transform:scaleX(0.7810);transform-origin:0 0;">7%</div>
<div class="t" style="left:601.30px;top:558.01px;font-size:7.49px;color:#a3a3a3;letter-spacing:0.048px;">Directional higher vol</div>
<div class="t" style="left:391.20px;top:581.01px;font-size:7.49px;color:#a3a3a3;letter-spacing:0.072px;">Pythagoras</div>
<div class="t" style="left:496.68px;top:581.01px;font-size:7.49px;color:#a3a3a3;transform:scaleX(0.8966);transform-origin:0 0;">34%</div>
<div class="t" style="left:601.55px;top:581.01px;font-size:7.49px;color:#a3a3a3;letter-spacing:-0.041px;">Special Situations</div>
<div class="t" style="left:712.23px;top:483.42px;font-size:11.48px;color:#333333;transform:scaleX(0.9673);transform-origin:0 0;-webkit-text-stroke:0.15px #333333;">My Funds</div>
<div class="t" style="left:711.20px;top:512.23px;font-size:7.70px;color:#383838;letter-spacing:0.250px;-webkit-text-stroke:0.1px #383838;">Name</div>
<div class="t" style="left:816.32px;top:512.23px;font-size:7.70px;color:#383838;transform:scaleX(0.9524);transform-origin:0 0;-webkit-text-stroke:0.1px #383838;">Returns</div>
<div class="t" style="left:921.55px;top:512.23px;font-size:7.70px;color:#383838;letter-spacing:-0.014px;-webkit-text-stroke:0.1px #383838;">Strategy</div>
<div class="t" style="left:711.20px;top:534.41px;font-size:7.49px;color:#a3a3a3;letter-spacing:-0.050px;">Forms</div>
<div class="t" style="left:816.58px;top:534.41px;font-size:7.49px;color:#a3a3a3;transform:scaleX(0.8606);transform-origin:0 0;">5.3%</div>
<div class="t" style="left:921.55px;top:534.41px;font-size:7.49px;color:#a3a3a3;letter-spacing:-0.096px;">Systematic CTA</div>
<div class="t" style="left:711.20px;top:558.01px;font-size:7.49px;color:#a3a3a3;letter-spacing:0.071px;">Republic</div>
<div class="t" style="left:816.60px;top:558.01px;font-size:7.49px;color:#a3a3a3;transform:scaleX(0.7810);transform-origin:0 0;">7%</div>
<div class="t" style="left:921.30px;top:558.01px;font-size:7.49px;color:#a3a3a3;letter-spacing:0.048px;">Directional higher vol</div>
<div class="t" style="left:711.20px;top:581.01px;font-size:7.49px;color:#a3a3a3;letter-spacing:0.072px;">Pythagoras</div>
<div class="t" style="left:816.58px;top:581.01px;font-size:7.49px;color:#a3a3a3;transform:scaleX(0.8966);transform-origin:0 0;">34%</div>
<div class="t" style="left:921.55px;top:581.01px;font-size:7.49px;color:#a3a3a3;letter-spacing:-0.041px;">Special Situations</div>
<div class="t" style="left:280.30px;top:480.73px;font-size:7.12px;color:#55c8ba;letter-spacing:0.128px;">Annualized</div>
<div style="position:absolute;left:0;top:599px;width:1070px;height:1px;background:#bbb1af"></div>
<div style="position:absolute;left:0;top:600px;width:1070px;height:3px;background:#f1dfdb"></div>
</body></html>
